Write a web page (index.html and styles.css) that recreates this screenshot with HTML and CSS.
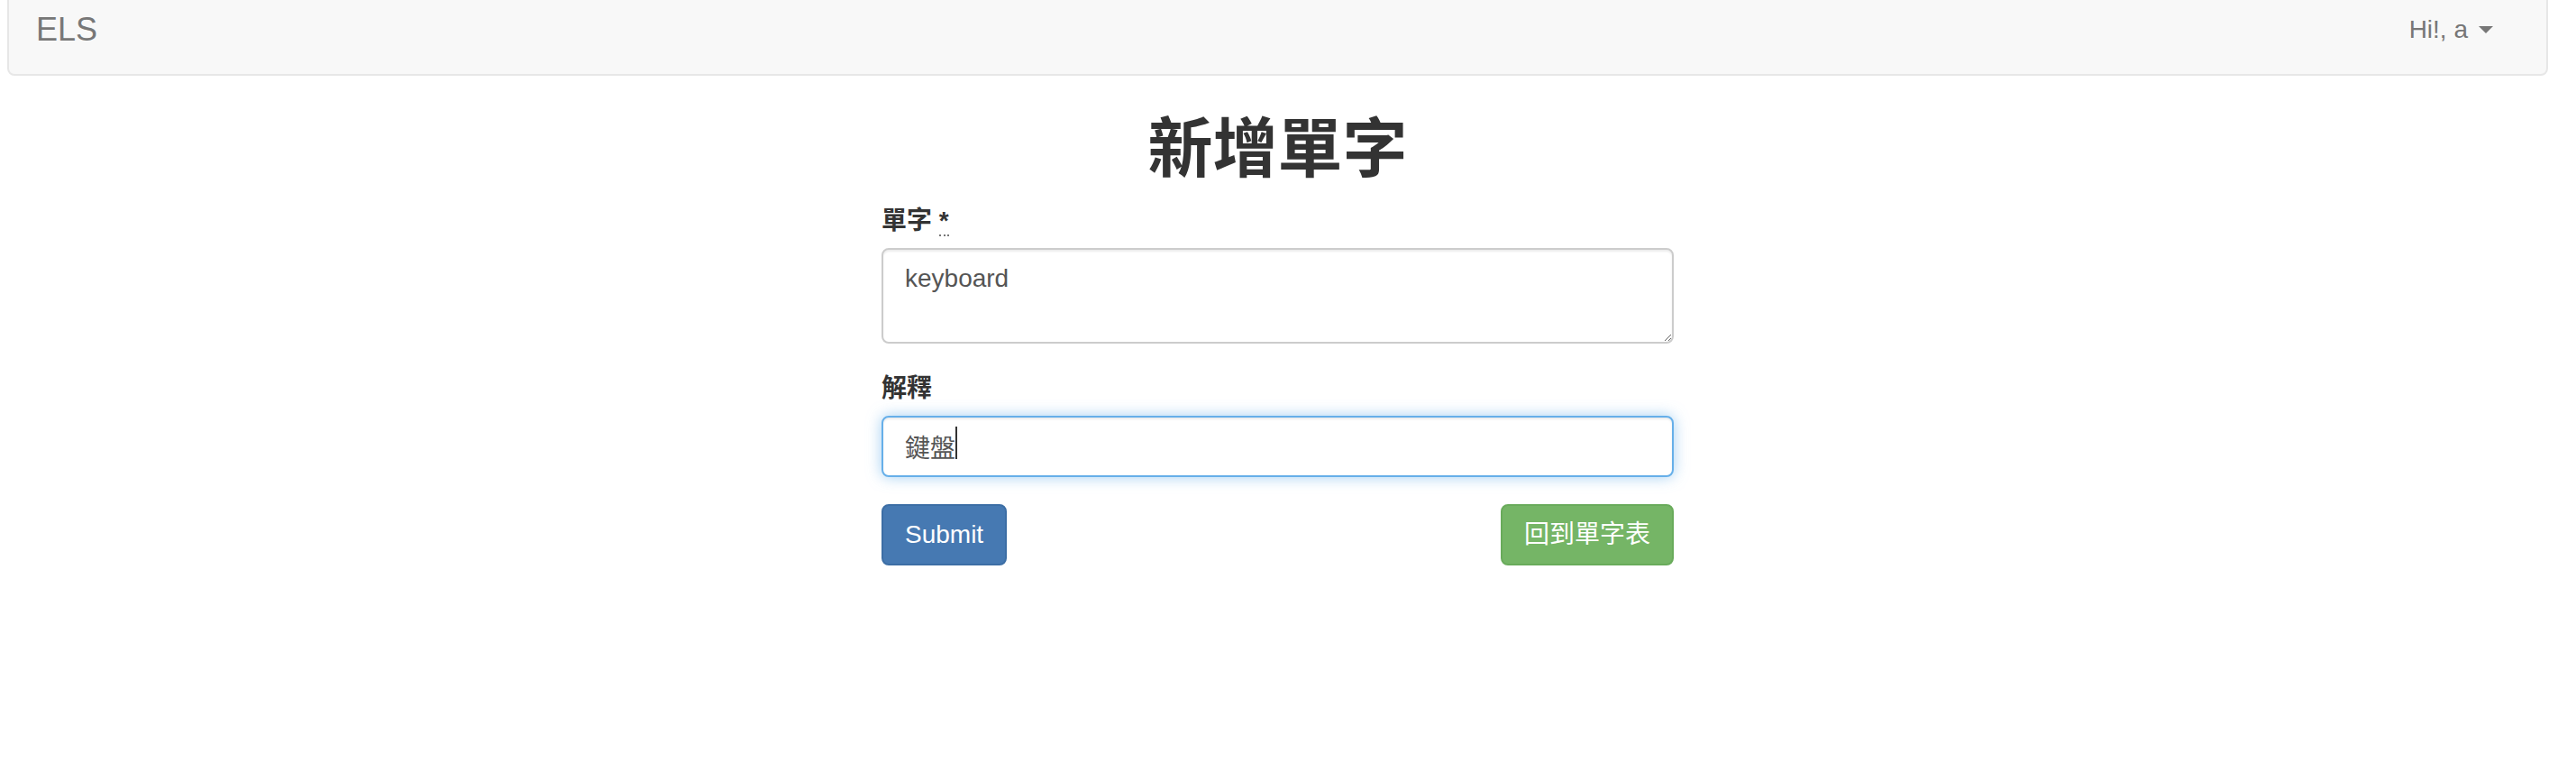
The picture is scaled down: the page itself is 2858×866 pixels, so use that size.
FILE: index.html
```html
<!DOCTYPE html>
<html lang="zh-Hant">
<head>
<meta charset="utf-8">
<title>新增單字</title>
<link rel="stylesheet" href="styles.css">
</head>
<body>
<div class="page">
  <nav class="navbar">
    <a class="brand" href="#">ELS</a>
    <a class="user" href="#">Hi!, a <span class="caret"></span></a>
  </nav>
  <main class="content">
    <h1 class="title">新增單字</h1>
    <form class="word-form">
      <div class="form-group">
        <label class="label">單字 <abbr title="required">*</abbr></label>
        <textarea class="control textarea">keyboard</textarea>
      </div>
      <div class="form-group">
        <label class="label">解釋</label>
        <div class="input-wrap">
          <input class="control input is-focused" type="text" value="鍵盤">
          <span class="text-caret"></span>
        </div>
      </div>
      <div class="actions">
        <button class="btn btn-primary" type="button">Submit</button>
        <a class="btn btn-success" href="#">回到單字表</a>
      </div>
    </form>
  </main>
</div>
</body>
</html>
```

FILE: styles.css
```css
html, body {
  margin: 0;
  padding: 0;
  background: #fff;
}

body {
  font-family: "Liberation Sans", "Noto Sans CJK TC", sans-serif;
  font-size: 28px;
  line-height: 40px;
  color: #333;
}

.page {
  margin-right: 23px;
}

.navbar {
  box-sizing: border-box;
  height: 102px;
  margin: -18px 8px 0;
  padding: 0 59px 0 30px;
  background: #f8f8f8;
  border: 2px solid #e7e7e7;
  border-radius: 8px;
  display: flex;
  align-items: center;
  justify-content: space-between;
}

.brand {
  font-size: 36px;
  line-height: 40px;
  color: #777;
  text-decoration: none;
}

.user {
  font-size: 28px;
  line-height: 40px;
  color: #777;
  text-decoration: none;
  display: flex;
  align-items: center;
}

.caret {
  display: inline-block;
  width: 0;
  height: 0;
  margin-left: 12px;
  border-top: 8px solid #777;
  border-left: 8px solid transparent;
  border-right: 8px solid transparent;
}

.content {
  width: 879px;
  margin: 42px auto 0;
}

.title {
  margin: 0 0 20px;
  font-size: 72px;
  line-height: 79px;
  font-weight: 700;
  text-align: center;
  color: #333;
}

.form-group {
  margin-bottom: 30px;
}

.label {
  display: inline-block;
  margin-bottom: 10px;
  font-weight: bold;
}

.label abbr {
  text-decoration: none;
  border-bottom: 2px dotted #777;
  cursor: help;
}

.control {
  display: block;
  box-sizing: border-box;
  width: 100%;
  margin: 0;
  padding: 12px 24px;
  font-family: inherit;
  font-size: 28px;
  line-height: 40px;
  color: #555;
  background: #fff;
  border: 2px solid #ccc;
  border-radius: 8px;
  box-shadow: inset 0 2px 2px rgba(0, 0, 0, 0.075);
  outline: none;
}

.textarea {
  height: 106px;
  resize: vertical;
}

.input {
  height: 68px;
}

.is-focused {
  border-color: #66afe9;
  box-shadow: inset 0 2px 2px rgba(0, 0, 0, 0.075), 0 0 16px rgba(102, 175, 233, 0.6);
}

.input-wrap {
  position: relative;
}

.text-caret {
  position: absolute;
  left: 82px;
  top: 12px;
  width: 2px;
  height: 36px;
  background: #333;
}

.actions {
  display: flex;
  justify-content: space-between;
  align-items: center;
}

.btn {
  display: inline-block;
  box-sizing: border-box;
  padding: 12px 24px;
  font-family: inherit;
  font-size: 28px;
  line-height: 40px;
  font-weight: normal;
  color: #fff;
  text-decoration: none;
  border: 2px solid transparent;
  border-radius: 8px;
  cursor: pointer;
}

.btn-primary {
  background: #4679b2;
  border-color: #3c6ea5;
}

.btn-success {
  background: #75b566;
  border-color: #69ab5b;
}
```
